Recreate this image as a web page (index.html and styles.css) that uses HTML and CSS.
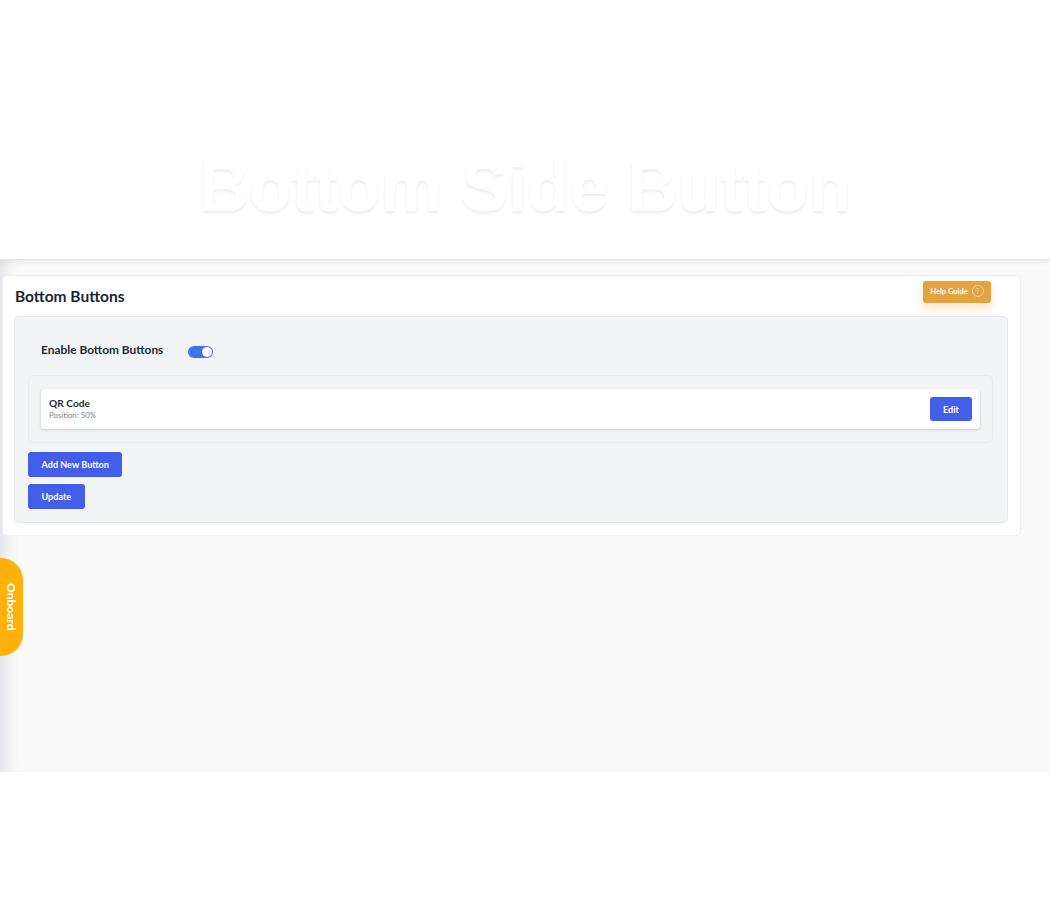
FILE: index.html
```html
<!DOCTYPE html>
<html lang="en">
<head>
    <meta charset="UTF-8">
    <meta name="viewport" content="width=device-width, initial-scale=1.0">
    <title>Bottom Side Button</title>
    <link rel="stylesheet" href="styles.css">
</head>
<body>
    <header class="hero">
        <h1>Bottom Side Button</h1>
    </header>

    <main class="content">
        <section class="card">
            <div class="card-head">
                <h2>Bottom Buttons</h2>
                <a class="help-guide" href="#">
                    Help Guide
                    <span class="help-icon">?</span>
                </a>
            </div>

            <div class="panel">
                <div class="enable-row">
                    <label>Enable Bottom Buttons</label>
                    <span class="toggle"><span class="knob"></span></span>
                </div>

                <div class="button-list">
                    <div class="button-item">
                        <div>
                            <div class="item-name">QR Code</div>
                            <div class="item-pos">Position: 50%</div>
                        </div>
                        <button class="btn btn-edit">Edit</button>
                    </div>
                </div>

                <button class="btn">Add New Button</button>
                <button class="btn">Update</button>
            </div>
        </section>
    </main>

    <a class="onboard" href="#">Onboard</a>
</body>
</html>
```

FILE: styles.css
```css
* {
    box-sizing: border-box;
}
body {
    margin: 0;
    background: #fff;
    font-family: "Lato", "Open Sans", sans-serif;
    color: #1f2937;
}
.hero {
    height: 260px;
    background: #fff;
    display: flex;
    justify-content: center;
    padding: 149px 0 0 0;
    border-bottom: 1px solid #e8e8eb;
    box-shadow: 0 2px 5px rgba(0, 0, 0, 0.06);
    position: relative;
}
.hero h1 {
    margin: 0;
    font-family: "Liberation Sans", Arial, sans-serif;
    font-size: 69.5px;
    line-height: 76px;
    font-weight: 700;
    color: #fff;
    -webkit-text-stroke: 2px #fff;
    paint-order: stroke fill;
    text-shadow: 0 2px 3px rgba(0, 0, 0, 0.08);
}
.content {
    height: 512px;
    background: #fafafa;
    box-shadow: inset 14px 0 16px -10px rgba(70, 70, 110, 0.16);
    padding: 15px 29px 0 2px;
}
.card {
    height: 261px;
    background: #fff;
    border: 1px solid #eceef0;
    border-radius: 5px;
    padding: 5px 12px 12px 11px;
}
.card-head {
    height: 35px;
    display: flex;
    justify-content: space-between;
    align-items: flex-start;
}
.card-head h2 {
    margin: 5px 0 0 1px;
    font-size: 15.5px;
    line-height: 20px;
    font-weight: 700;
    color: #1a2433;
}
.help-guide {
    width: 68px;
    height: 22px;
    margin-right: 17px;
    padding-bottom: 2px;
    display: flex;
    align-items: center;
    justify-content: center;
    gap: 4px;
    background: #e3a33f;
    border-radius: 3px;
    box-shadow: 0 6px 10px rgba(227, 163, 63, 0.25);
    color: #fff;
    font-size: 7.5px;
    font-weight: 700;
    text-decoration: none;
}
.help-icon {
    width: 12px;
    height: 12px;
    border: 1px solid #f3d9ad;
    border-radius: 50%;
    display: flex;
    align-items: center;
    justify-content: center;
    font-size: 8px;
    font-weight: 400;
    color: #f3d9ad;
}
.panel {
    height: 207px;
    background: #f3f4f6;
    border: 1px solid #e5e7eb;
    border-radius: 5px;
    padding: 0 13px;
}
.enable-row {
    height: 58px;
    padding: 12px 0 0 13px;
    display: flex;
    align-items: center;
}
.enable-row label {
    width: 147px;
    font-size: 11.9px;
    font-weight: 700;
    color: #1f2937;
    margin-top: -6px;
}
.toggle {
    width: 25px;
    height: 12px;
    background: #3b76ed;
    border-radius: 6px;
    display: flex;
    justify-content: flex-end;
    align-items: center;
    padding-right: 1px;
}
.knob {
    width: 10px;
    height: 10px;
    background: #fff;
    border-radius: 50%;
}
.button-list {
    height: 68px;
    margin-right: 1px;
    border: 1px solid #e9ebee;
    border-radius: 5px;
    padding: 13px 12px;
    margin-bottom: 9px;
}
.button-item {
    height: 40px;
    background: #fff;
    border-radius: 4px;
    box-shadow: 0 1px 3px rgba(0, 0, 0, 0.18);
    padding: 0 8px;
    display: flex;
    justify-content: space-between;
    align-items: center;
}
.item-name {
    font-size: 10.2px;
    font-weight: 700;
    color: #1f2937;
    line-height: 11px;
}
.item-pos {
    margin-top: 1px;
    font-size: 7.8px;
    color: #7b828e;
    line-height: 11px;
}
.btn {
    display: block;
    height: 25px;
    padding: 0 13.5px;
    margin-bottom: 7px;
    background: #435ee8;
    color: #fff;
    border: none;
    border-radius: 3px;
    font-family: inherit;
    font-size: 9.1px;
    font-weight: 700;
}
.btn-edit {
    width: 42px;
    height: 24px;
    padding: 0;
    margin: 0;
}
.onboard {
    position: fixed;
    left: 0;
    top: 558px;
    width: 23px;
    height: 98px;
    background: #fdb10a;
    border-radius: 0 22px 22px 0;
    color: #fff;
    font-size: 12px;
    font-weight: 900;
    text-decoration: none;
    writing-mode: vertical-rl;
    display: flex;
    align-items: center;
    justify-content: center;
}
```
